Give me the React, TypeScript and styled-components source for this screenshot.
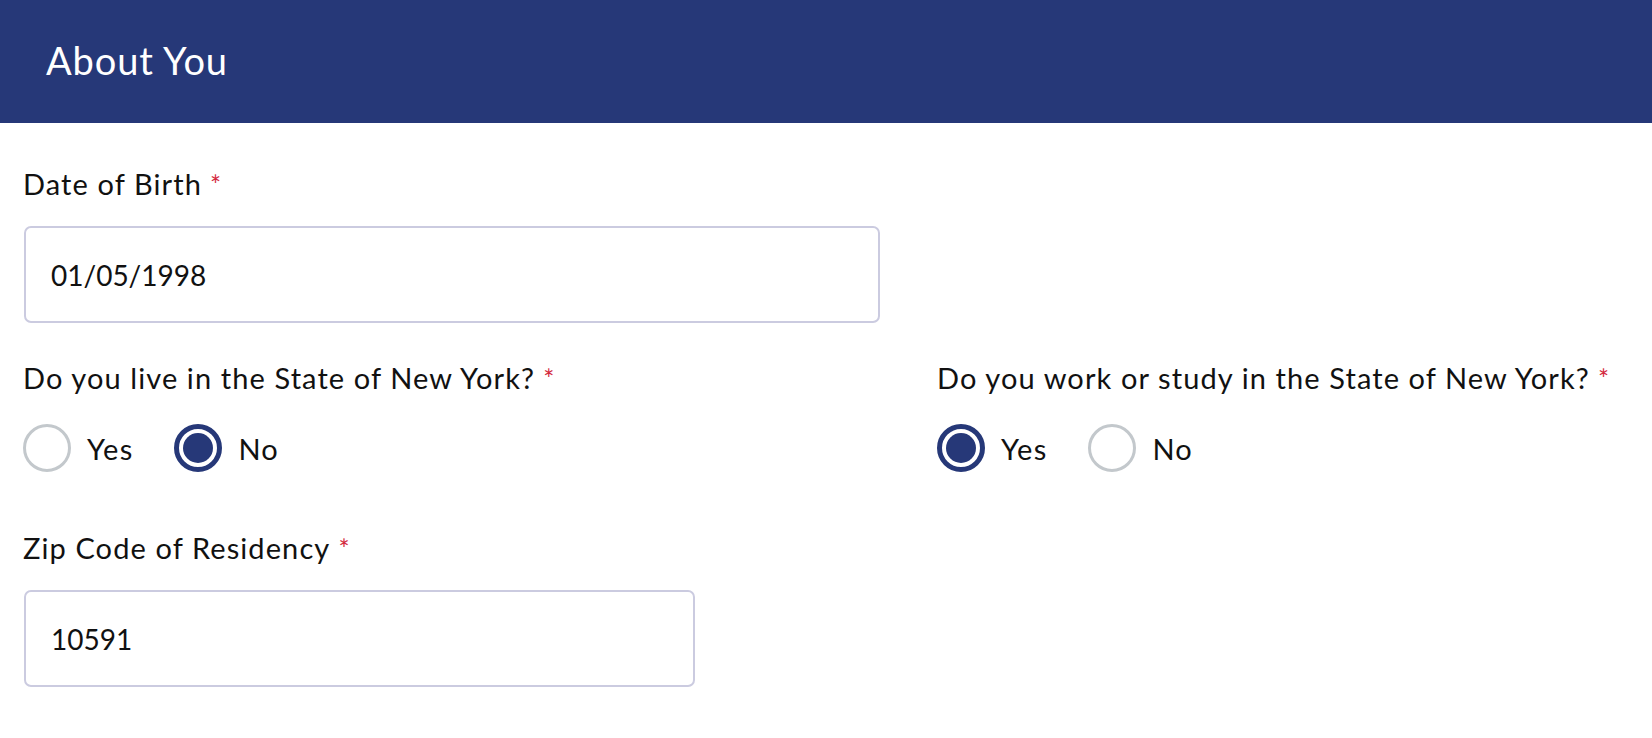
import React from "react";
import styled, { createGlobalStyle } from "styled-components";

const GlobalStyle = createGlobalStyle`
  html, body { margin: 0; padding: 0; background: #ffffff; }
  body { font-family: Lato, "Noto Sans", sans-serif; color: #111111; }
  * { box-sizing: border-box; }
`;

const Header = styled.header`
  height: 123px;
  background: #263878;
  display: flex;
  align-items: center;
  padding: 0 0 4px 46px;
`;

const Title = styled.h1`
  margin: 0;
  font-family: Lato, "Noto Sans", sans-serif;
  font-weight: 400;
  font-size: 38px;
  color: #ffffff;
  letter-spacing: 0.9px;
`;

const Form = styled.form`
  display: flex;
  flex-direction: column;
  padding: 44px 24px 0 24px;
`;

const Field = styled.div<{ $after?: number; $gap?: number }>`
  display: flex;
  flex-direction: column;
  gap: ${(p) => p.$gap ?? 24}px;
  margin-bottom: ${(p) => p.$after ?? 38}px;
`;

const Label = styled.label`
  font-size: 29px;
  line-height: 34px;
  color: #111111;
  margin-left: -1px;
  letter-spacing: 1.1px;
`;

const Required = styled.span`
  color: #d3283d;
  font-size: 26px;
  margin-left: 8px;
`;

const TextInput = styled.input<{ $width: number }>`
  width: ${(p) => p.$width}px;
  height: 97px;
  border: 2px solid #cbcbe0;
  border-radius: 7px;
  padding: 0 0 0 25px;
  font-family: Lato, "Noto Sans", sans-serif;
  font-size: 28px;
  color: #111111;
  background: #ffffff;
  outline: none;
`;

const Columns = styled.div`
  display: grid;
  grid-template-columns: 856px 1fr;
  column-gap: 58px;
`;

const RadioGroup = styled.div`
  display: flex;
  align-items: center;
  gap: 41px;
  margin-left: -1px;
`;

const Option = styled.label`
  display: flex;
  align-items: center;
  gap: 16px;
  font-size: 29px;
  letter-spacing: 1.2px;
  color: #111111;
  cursor: pointer;
`;

const Circle = styled.span<{ $checked: boolean }>`
  width: 48px;
  height: 48px;
  border-radius: 50%;
  flex: none;
  display: flex;
  align-items: center;
  justify-content: center;
  border: ${(p) => (p.$checked ? "5px solid #263878" : "3.5px solid #c3c8cc")};
  background: #ffffff;
  &::after {
    content: "";
    display: ${(p) => (p.$checked ? "block" : "none")};
    width: 30px;
    height: 30px;
    border-radius: 50%;
    background: #263878;
  }
`;

function Radio({ value, checked }: { value: string; checked: boolean }) {
  return (
    <Option>
      <Circle $checked={checked} />
      <span>{value}</span>
    </Option>
  );
}

function YesNo({ selected }: { selected: "Yes" | "No" }) {
  return (
    <RadioGroup role="radiogroup">
      <Radio value="Yes" checked={selected === "Yes"} />
      <Radio value="No" checked={selected === "No"} />
    </RadioGroup>
  );
}

export default function App() {
  return (
    <>
      <GlobalStyle />
      <Header>
        <Title>About You</Title>
      </Header>
      <Form onSubmit={(e) => e.preventDefault()}>
        <Field>
          <Label>
            Date of Birth<Required>*</Required>
          </Label>
          <TextInput $width={856} defaultValue="01/05/1998" />
        </Field>
        <Columns>
          <Field $after={59} $gap={28}>
            <Label>
              Do you live in the State of New York?<Required>*</Required>
            </Label>
            <YesNo selected="No" />
          </Field>
          <Field $after={59} $gap={28}>
            <Label>
              Do you work or study in the State of New York?<Required>*</Required>
            </Label>
            <YesNo selected="Yes" />
          </Field>
        </Columns>
        <Field $after={0}>
          <Label>
            Zip Code of Residency<Required>*</Required>
          </Label>
          <TextInput $width={671} defaultValue="10591" />
        </Field>
      </Form>
    </>
  );
}
